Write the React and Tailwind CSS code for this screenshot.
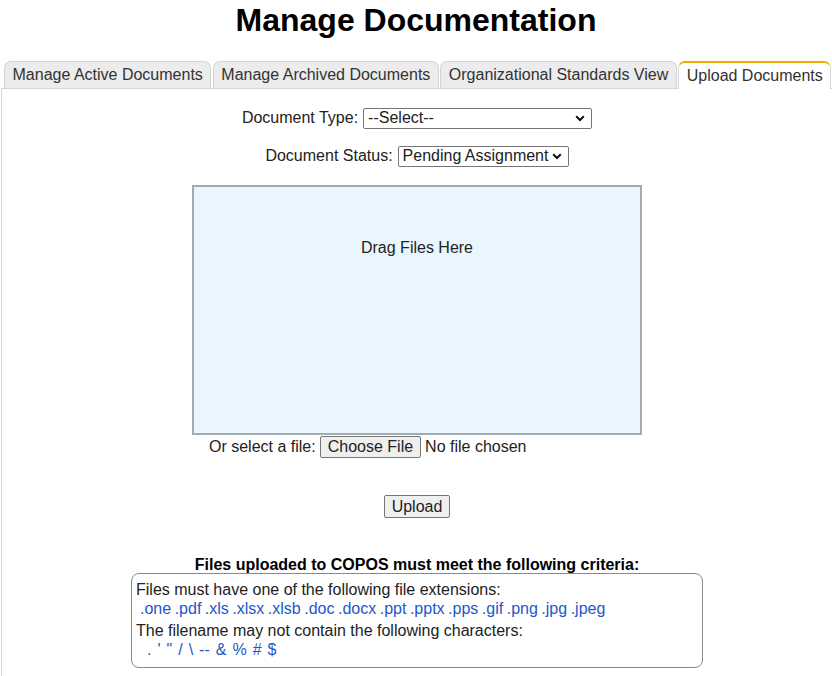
import React from "react"

const tabs = [
  { label: "Manage Active Documents", active: false },
  { label: "Manage Archived Documents", active: false },
  { label: "Organizational Standards View", active: false },
  { label: "Upload Documents", active: true },
]

const extensions = [".one", ".pdf", ".xls", ".xlsx", ".xlsb", ".doc", ".docx", ".ppt", ".pptx", ".pps", ".gif", ".png", ".jpg", ".jpeg"]
const badChars = [".", "'", "\"", "/", "\\", "--", "&", "%", "#", "$"]

function Chevron() {
  return (
    <svg width="10" height="7" viewBox="0 0 10 7" className="shrink-0">
      <path d="M1.2 1.2 L5 5 L8.8 1.2" fill="none" stroke="#111" strokeWidth="2" />
    </svg>
  )
}

function FakeSelect({ value, width }) {
  return (
    <div className={"flex items-center justify-between h-[21px] border border-[#767676] rounded-[2px] bg-white pl-[4px] pr-[6px] text-[16px] leading-none " + width}>
      <span>{value}</span>
      <Chevron />
    </div>
  )
}

export default function App() {
  return (
    <div className="min-h-screen bg-white text-[#222] font-['Liberation_Sans',Arial,sans-serif] text-[16px]">
      <h1 className="pt-[2px] text-center text-[32px] leading-[37px] font-bold text-black">Manage Documentation</h1>

      <div className="mt-[22px] flex items-end gap-[1.5px] pl-[4px]">
        {tabs.map(t => (
          <div
            key={t.label}
            className={
              t.active
                ? "shrink-0 whitespace-nowrap h-[28px] px-[7.5px] flex items-center rounded-t-[7px] border border-b-0 border-[#d6d6d6] border-t-[2px] border-t-[#f0ad00] bg-white text-[#333] -mb-[1px] relative z-10"
                : "shrink-0 whitespace-nowrap h-[27px] px-[7.5px] flex items-center rounded-t-[7px] border border-b-0 border-[#d3d3d3] bg-[#ececec] text-[#333]"
            }
          >
            {t.label}
          </div>
        ))}
      </div>

      <div className="ml-[1px] border-l border-t border-[#d6d6d6] pb-[40px]">
        <div className="mt-[17px] flex items-center justify-center gap-[5px]">
          <span>Document Type:</span>
          <FakeSelect value="--Select--" width="w-[229px]" />
        </div>

        <div className="mt-[14px] flex items-center justify-center gap-[5px]">
          <span>Document Status:</span>
          <FakeSelect value="Pending Assignment" width="w-[171px]" />
        </div>

        <div className="mx-auto mt-[17px] w-[450px]">
          <div className="h-[250px] border-2 border-[#a3acb1] bg-[#eaf6fd] pt-[49px] text-center">
            Drag Files Here
          </div>
          <div className="flex items-center gap-[4px] pl-[17px]">
            <span>Or select a file:</span>
            <button className="h-[22px] px-[7px] border border-[#767676] rounded-[2px] bg-[#efefef] leading-none">Choose File</button>
            <span>No file chosen</span>
          </div>
        </div>

        <div className="mt-[36px] flex justify-center">
          <button className="h-[23px] px-[7px] border border-[#767676] rounded-[2px] bg-[#efefef] leading-none">Upload</button>
        </div>

        <div className="mt-[38px] text-center font-bold text-black leading-[17px]">
          Files uploaded to COPOS must meet the following criteria:
        </div>

        <div className="mx-auto w-[572px] rounded-[8px] border border-[#8a8a8a] pl-[4px] pt-[7px] pb-[8px] leading-[18.5px]">
          <div>Files must have one of the following file extensions:</div>
          <div className="flex gap-[3.5px] pl-[4px] text-[#2159c6]">
            {extensions.map(e => <span key={e}>{e}</span>)}
          </div>
          <div className="mt-[4px]">The filename may not contain the following characters:</div>
          <div className="flex gap-[6px] pl-[11px] text-[#2159c6]">
            {badChars.map(c => <span key={c}>{c}</span>)}
          </div>
        </div>
      </div>
    </div>
  )
}
